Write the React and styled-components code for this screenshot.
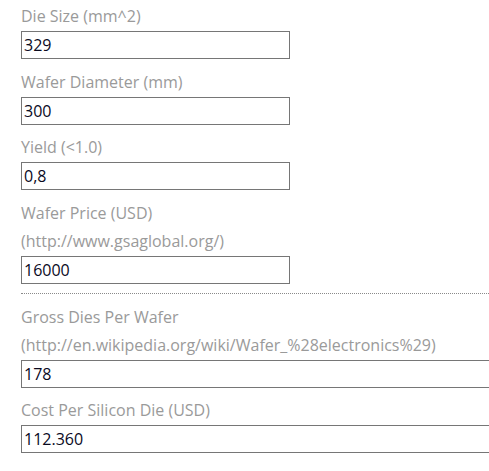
import styled, { createGlobalStyle } from "styled-components";

const GlobalStyle = createGlobalStyle`
  html, body {
    margin: 0;
    padding: 0;
    background: #fff;
  }
  body {
    font-family: "Open Sans", "Liberation Sans", sans-serif;
  }
`;

const Form = styled.form`
  display: flex;
  flex-direction: column;
  gap: 9.5px;
  padding: 3px 0 0 21px;
  overflow: hidden;
`;

const Field = styled.div`
  display: flex;
  flex-direction: column;
`;

const Label = styled.label`
  display: block;
  color: #9a9a9a;
  font-size: 16px;
  line-height: 27px;
  margin-bottom: 1px;
  white-space: nowrap;
`;

const Input = styled.input`
  box-sizing: border-box;
  flex: none;
  width: ${(p) => (p.$wide ? "calc(100% + 20px)" : "269px")};
  height: 28px;
  margin: 0;
  padding: 0 2px;
  border: 1px solid #767676;
  border-radius: 0;
  font-family: "Open Sans", "Liberation Sans", sans-serif;
  font-size: 16px;
  color: #0a0a1e;
  background: #fff;
  outline: none;
`;

const Divider = styled.hr`
  width: 100%;
  margin: 0;
  border: none;
  border-top: 1px dotted #8a8a8a;
`;

const fields = [
  { label: ["Die Size (mm^2)"], value: "329" },
  { label: ["Wafer Diameter (mm)"], value: "300" },
  { label: ["Yield (<1.0)"], value: "0,8" },
  { label: ["Wafer Price (USD)", "(http://www.gsaglobal.org/)"], value: "16000" },
];

const results = [
  {
    label: ["Gross Dies Per Wafer", "(http://en.wikipedia.org/wiki/Wafer_%28electronics%29)"],
    value: "178",
  },
  { label: ["Cost Per Silicon Die (USD)"], value: "112.360" },
];

function Row({ label, value, wide }) {
  return (
    <Field>
      {label.map((line) => (
        <Label key={line}>{line}</Label>
      ))}
      <Input $wide={wide} defaultValue={value} readOnly={wide} />
    </Field>
  );
}

export default function App() {
  return (
    <>
      <GlobalStyle />
      <Form>
        {fields.map((f) => (
          <Row key={f.label[0]} {...f} />
        ))}
        <Divider />
        {results.map((f) => (
          <Row key={f.label[0]} {...f} wide />
        ))}
      </Form>
    </>
  );
}
